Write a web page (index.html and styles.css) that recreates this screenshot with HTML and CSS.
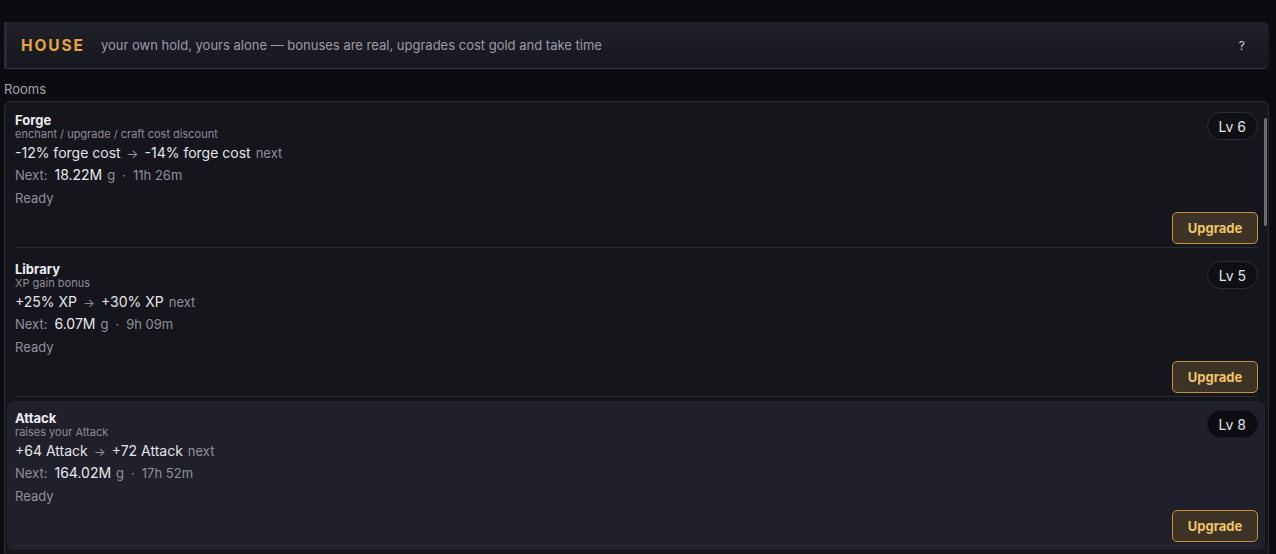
FILE: index.html
```html
<!DOCTYPE html>
<html lang="en">
<head>
<meta charset="utf-8">
<title>House</title>
<link rel="stylesheet" href="styles.css">
</head>
<body>
<main class="page">
  <header class="banner">
    <h1 class="banner-title">HOUSE</h1>
    <p class="banner-sub">your own hold, yours alone — bonuses are real, upgrades cost gold and take time</p>
    <button class="help" type="button">?</button>
  </header>

  <div class="section-label">Rooms</div>

  <div class="rooms-frame">
    <div class="rooms">
      <div class="room">
        <div class="room-inner">
          <div class="room-info">
            <div class="room-name">Forge</div>
            <div class="room-desc">enchant / upgrade / craft cost discount</div>
            <div class="room-effect"><span class="cur">-12% forge cost</span><span class="arrow">→</span><span class="cur">-14% forge cost</span><span class="muted">next</span></div>
            <div class="room-cost"><span class="muted">Next:</span><span class="gold">18.22M</span><span class="muted">g</span><span class="dot">·</span><span class="muted">11h 26m</span></div>
            <div class="room-status">Ready</div>
          </div>
          <div class="room-side">
            <span class="lv">Lv 6</span>
            <button class="upgrade" type="button">Upgrade</button>
          </div>
        </div>
      </div>

      <div class="room">
        <div class="room-inner">
          <div class="room-info">
            <div class="room-name">Library</div>
            <div class="room-desc">XP gain bonus</div>
            <div class="room-effect"><span class="cur">+25% XP</span><span class="arrow">→</span><span class="cur">+30% XP</span><span class="muted">next</span></div>
            <div class="room-cost"><span class="muted">Next:</span><span class="gold">6.07M</span><span class="muted">g</span><span class="dot">·</span><span class="muted">9h 09m</span></div>
            <div class="room-status">Ready</div>
          </div>
          <div class="room-side">
            <span class="lv">Lv 5</span>
            <button class="upgrade" type="button">Upgrade</button>
          </div>
        </div>
      </div>

      <div class="room room-hover">
        <div class="room-inner">
          <div class="room-info">
            <div class="room-name">Attack</div>
            <div class="room-desc">raises your Attack</div>
            <div class="room-effect"><span class="cur">+64 Attack</span><span class="arrow">→</span><span class="cur">+72 Attack</span><span class="muted">next</span></div>
            <div class="room-cost"><span class="muted">Next:</span><span class="gold">164.02M</span><span class="muted">g</span><span class="dot">·</span><span class="muted">17h 52m</span></div>
            <div class="room-status">Ready</div>
          </div>
          <div class="room-side">
            <span class="lv">Lv 8</span>
            <button class="upgrade" type="button">Upgrade</button>
          </div>
        </div>
      </div>
    </div>
    <div class="scroll-thumb"></div>
  </div>
</main>
</body>
</html>
```

FILE: styles.css
```css
html, body {
  margin: 0;
  padding: 0;
  height: 100%;
  overflow: hidden;
  background: #0b0c10;
}

body {
  font-family: Inter, "Noto Sans", "Liberation Sans", sans-serif;
  color: #e4e4ea;
}

.page {
  padding: 22px 7px 0 4px;
}

.banner {
  display: flex;
  align-items: center;
  height: 47px;
  box-sizing: border-box;
  padding: 0 20px 0 14px;
  background: linear-gradient(180deg, #1f2029 0%, #17181e 100%);
  border-left: 3px solid #2a2b38;
  border-bottom: 1px solid #343545;
  border-radius: 0 6px 6px 0;
}

.banner-title {
  margin: 0;
  font-size: 15.5px;
  font-weight: 700;
  letter-spacing: 1.9px;
  color: #e3a443;
}

.banner-sub {
  margin: 0 0 0 16px;
  flex: 1;
  font-size: 13px;
  color: #9b9ba8;
}

.help {
  background: none;
  border: none;
  padding: 0 4px;
  font-family: inherit;
  font-size: 12px;
  color: #c9c9d2;
  cursor: pointer;
}

.section-label {
  margin-top: 12px;
  height: 20px;
  font-size: 13px;
  color: #a2a2ae;
}

.rooms-frame {
  position: relative;
  height: 458px;
  box-sizing: border-box;
  border: 1px solid #2a2b33;
  border-radius: 6px;
  background: #15161b;
  overflow: hidden;
}

.rooms {
  height: 100%;
  box-sizing: border-box;
  padding: 1px 3px 0 2px;
  overflow: hidden;
}

.scroll-thumb {
  position: absolute;
  top: 16px;
  right: 1px;
  width: 3px;
  height: 108px;
  border-radius: 2px;
  background: #6a6b74;
}

.room {
  padding: 0 7px 4px 8px;
  border-radius: 6px;
}

.room-hover {
  background: #1f2029;
}

.room-inner {
  display: flex;
  justify-content: space-between;
  height: 145px;
  box-sizing: border-box;
  padding: 9px 0 3px 0;
  border-bottom: 1px solid #2a2b35;
}

.room-info {
  display: flex;
  flex-direction: column;
}

.room-name {
  font-size: 13px;
  line-height: 16px;
  font-weight: 700;
  color: #ececf1;
}

.room-desc {
  font-size: 11px;
  line-height: 13px;
  color: #8c8c98;
}

.room-effect {
  margin-top: 3px;
  font-size: 14px;
  line-height: 18px;
  color: #e4e4ea;
  display: flex;
  align-items: baseline;
  gap: 5px;
}

.arrow {
  font-size: 12.5px;
  color: #8e8e9a;
  margin: 0 1px;
}

.muted {
  color: #8f8f9b;
  font-size: 13px;
}

.room-cost {
  margin-top: 3px;
  font-size: 14px;
  line-height: 18px;
  display: flex;
  align-items: baseline;
  gap: 5px;
}

.room-cost .gold {
  margin-left: 2px;
  color: #e8e8ee;
}

.dot {
  color: #8f8f9b;
  font-size: 13px;
  margin: 0 2px;
}

.room-status {
  margin-top: 6px;
  font-size: 13px;
  line-height: 16px;
  color: #8f8f9b;
}

.room-side {
  display: flex;
  flex-direction: column;
  justify-content: space-between;
  align-items: flex-end;
}

.lv {
  display: inline-flex;
  align-items: center;
  justify-content: center;
  height: 28px;
  box-sizing: border-box;
  padding: 0 11px;
  border-radius: 14px;
  border: 1px solid #2b2c35;
  background: #0e0f13;
  font-size: 14px;
  color: #e2e2e8;
}

.room-hover .lv {
  border-color: #16171d;
  background: #0c0d11;
}

.upgrade {
  height: 32px;
  width: 86px;
  box-sizing: border-box;
  border: 1px solid #c89139;
  border-radius: 5px;
  background: #3d3226;
  font-family: inherit;
  font-size: 13px;
  font-weight: 700;
  color: #f0c469;
  cursor: pointer;
}
```
